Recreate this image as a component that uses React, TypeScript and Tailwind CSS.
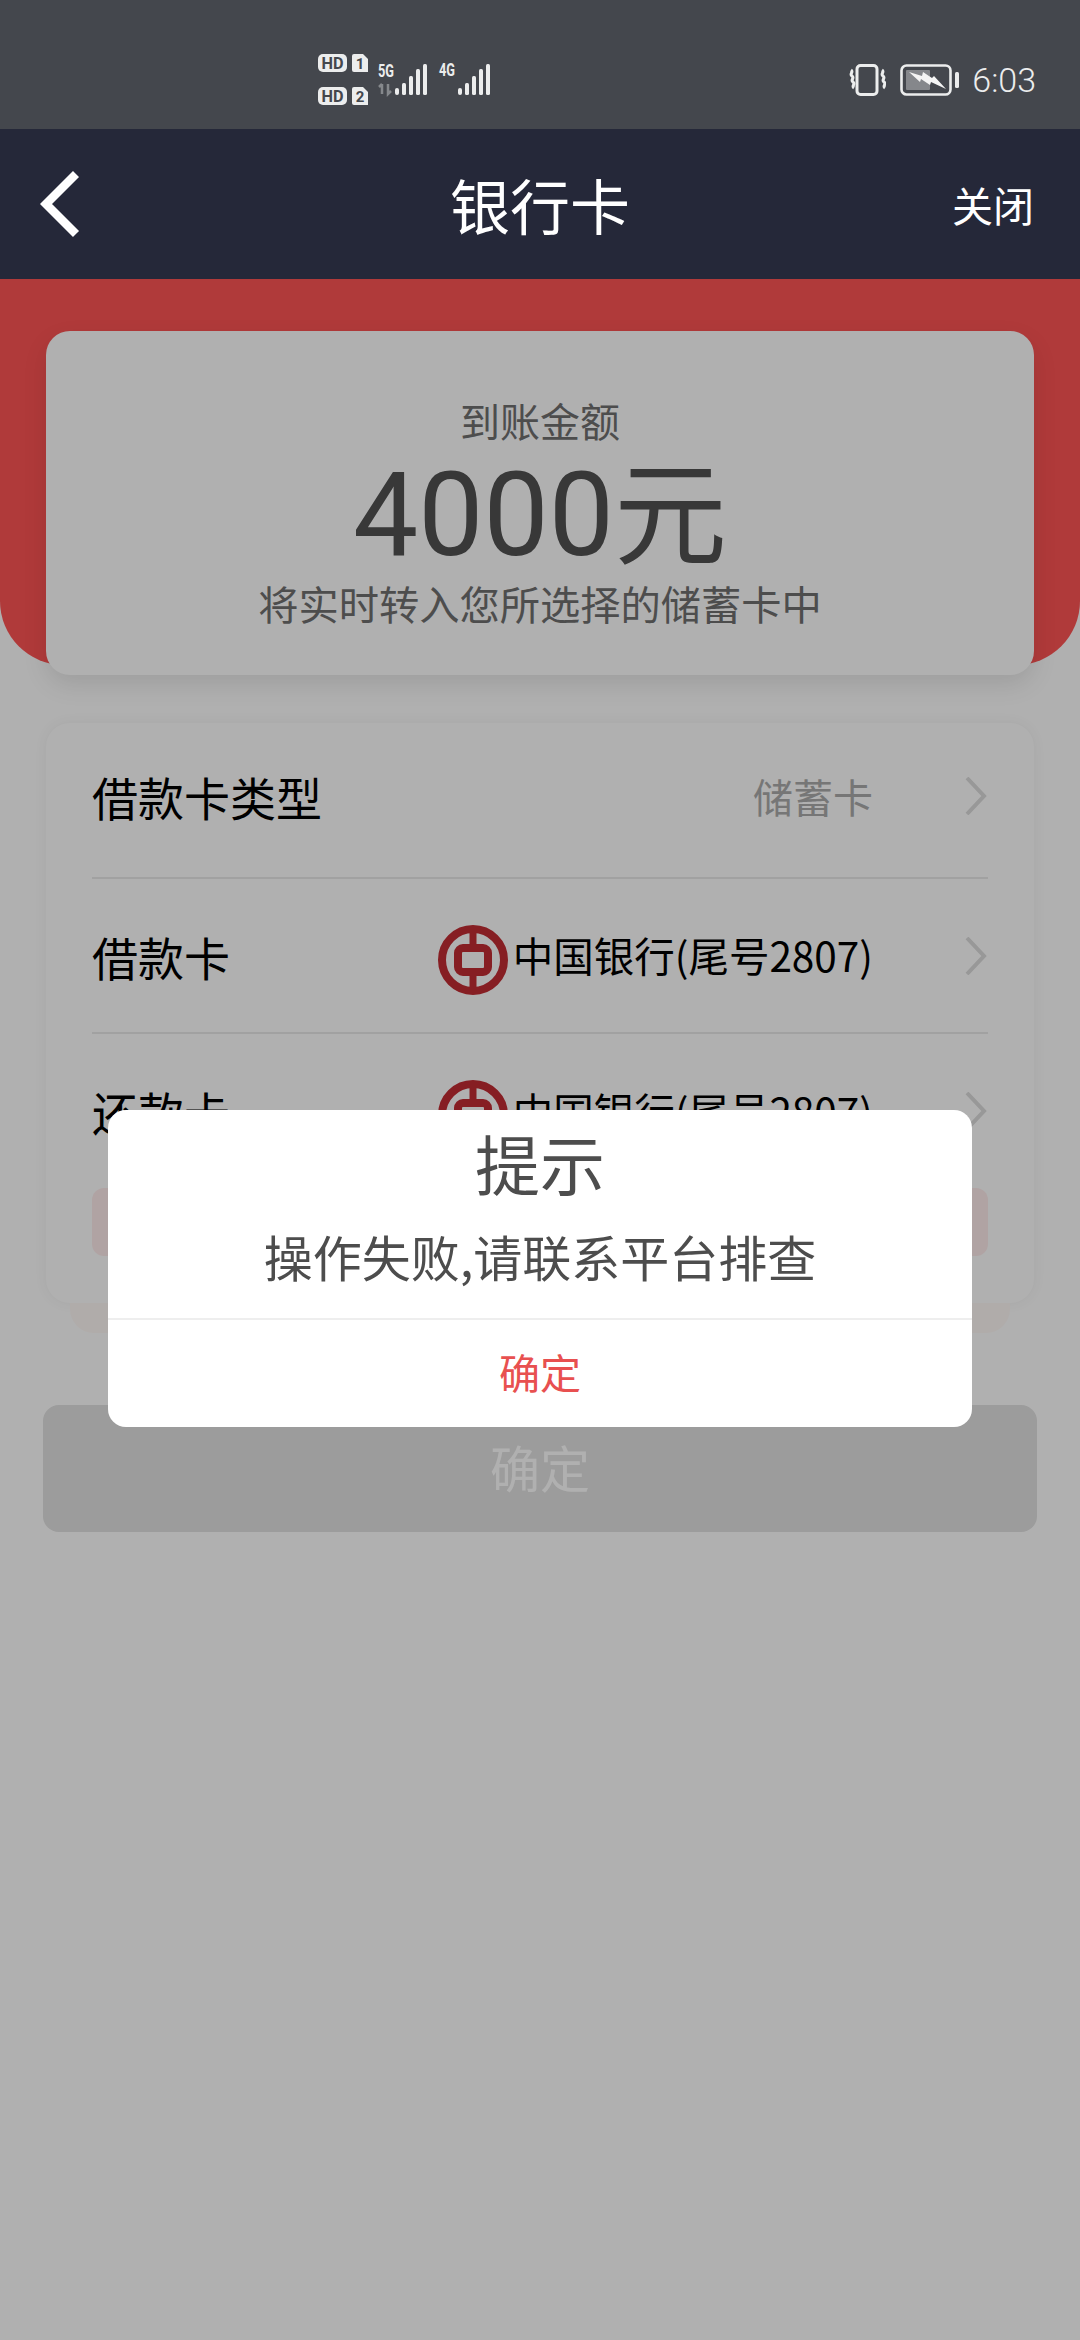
const cjk = "font-['Noto_Sans_CJK_SC','Noto_Sans',sans-serif]";

const Signal = ({ x }: { x: number }) => (
  <>
    <rect x={x} y={34} width={4} height={7} rx={2} fill="#eceded" />
    <rect x={x + 7} y={29} width={4} height={12} rx={1.5} fill="#eceded" />
    <rect x={x + 14} y={22} width={4} height={19} rx={1.5} fill="#eceded" />
    <rect x={x + 21} y={15} width={4} height={26} rx={1.5} fill="#eceded" />
    <rect x={x + 28} y={10} width={4} height={31} rx={1.5} fill="#eceded" />
  </>
);

const SimBadge = ({ y, n }: { y: number; n: string }) => (
  <>
    <rect x={0} y={y} width={29} height={18} rx={5} fill="#eceded" />
    <text x={3.5} y={y + 15} textLength={22} lengthAdjust="spacingAndGlyphs" fontSize={16} fontWeight={700} fontFamily="Roboto, sans-serif" fill="#44474d">
      HD
    </text>
    <path d={`M36 ${y}h9l5 5v13h-14a2 2 0 0 1-2-2v-14a2 2 0 0 1 2-2z`} fill="#eceded" />
    <text x={42} y={y + 15} textAnchor="middle" fontSize={15} fontWeight={700} fontFamily="Roboto, sans-serif" fill="#44474d">
      {n}
    </text>
  </>
);

const StatusLeft = () => (
  <svg width="172" height="52" viewBox="0 0 172 52">
    <SimBadge y={0} n="1" />
    <SimBadge y={33} n="2" />
    <text x={60} y={23} textLength={16} lengthAdjust="spacingAndGlyphs" fontSize={18} fontWeight={700} fontFamily="Roboto, sans-serif" fill="#eceded">5G</text>
    <path d="M64 30v10M61 33l3-3M70 30v10l3-3" stroke="#85888c" strokeWidth={2.5} fill="none" />
    <Signal x={77} />
    <text x={121} y={22} textLength={16} lengthAdjust="spacingAndGlyphs" fontSize={18} fontWeight={700} fontFamily="Roboto, sans-serif" fill="#eceded">4G</text>
    <Signal x={140} />
  </svg>
);

const StatusRight = () => (
  <div className="flex items-center">
    <svg width="37" height="32" viewBox="0 0 37 32" fill="none" stroke="#eceded">
      <rect x="8" y="1.5" width="20" height="29" rx="3.5" strokeWidth="3" />
      <path d="M2 6c3 2-2 4 1 6s-2 4 1 6s-2 4 1 6M33 6c3 2-2 4 1 6s-2 4 1 6s-2 4 1 6" strokeWidth="3" />
    </svg>
    <svg width="60" height="32" viewBox="0 0 60 32" className="ml-[14px]">
      <rect x="1.5" y="1.5" width="49" height="29" rx="5" fill="none" stroke="#eceded" strokeWidth="2.6" />
      <rect x="6" y="6" width="24" height="20" rx="1" fill="#85878b" />
      <path d="M9 8l13 4l1-4l9 6l2-2l12 13l-15-7l-1 3l-9-6l-1 3z" fill="#f4f4f4" />
      <rect x="55" y="8" width="4" height="16" rx="1.5" fill="#eceded" />
    </svg>
    <span className="ml-[12px] text-[34px] leading-none font-light text-[#eceded] font-['Roboto',sans-serif]">6:03</span>
  </div>
);

const Chevron = () => (
  <svg width="22" height="38" viewBox="0 0 22 38" fill="none" stroke="#dcdcdc" strokeWidth="4">
    <path d="M2 1l17 18L2 37" />
  </svg>
);

const BocLogo = () => (
  <svg width="72" height="72" viewBox="0 0 72 72" fill="none" stroke="#c22c33" className="mt-[8px] shrink-0">
    <circle cx="36" cy="36" r="31" strokeWidth="8" />
    <rect x="21" y="24" width="30" height="24" rx="5" strokeWidth="8" />
    <path d="M36 5v17M36 50v17" strokeWidth="7" />
  </svg>
);

const Row = ({ label, children, className }: { label: string; children: React.ReactNode; className: string }) => (
  <div className={`flex items-center justify-between ${className}`}>
    <span className="text-[46px] leading-none text-black">{label}</span>
    <div className="flex items-center">
      {children}
      <div className="ml-[92px] mr-[1px]">
        <Chevron />
      </div>
    </div>
  </div>
);

const BankValue = () => (
  <>
    <BocLogo />
    <span className="ml-[4px] text-[40.5px] leading-none text-black">中国银行(尾号2807)</span>
  </>
);

export default function App() {
  return (
    <div className={`relative h-[2340px] w-[1080px] overflow-hidden bg-white ${cjk}`}>
      <div className="flex h-[129px] items-center justify-between bg-[#44474d] pl-[318px] pr-[44px] pt-[30px]">
        <StatusLeft />
        <StatusRight />
      </div>
      <div className="flex h-[150px] items-center justify-between bg-[#252839] pl-[40px] pr-[46px]">
        <div className="w-[106px]">
          <svg width="40" height="66" viewBox="0 0 40 66" fill="none" stroke="#fff" strokeWidth="8.5">
            <path d="M36 3L6 33l30 30" />
          </svg>
        </div>
        <span className="text-[60px] leading-none text-white">银行卡</span>
        <span className="w-[100px] text-right text-[41px] leading-none text-white">关闭</span>
      </div>

      <div className="h-[386px] rounded-b-[64px] bg-[#ff5454]" />

      <div className="-mt-[334px] px-[46px]">
        <div className="flex h-[344px] flex-col items-center rounded-[24px] bg-white pt-[68px] shadow-[0_10px_24px_rgba(0,0,0,0.1)]">
          <span className="text-[40px] leading-[42px] text-[#707070]">到账金额</span>
          <span className="mt-[15px] flex items-baseline leading-none text-[#515151]">
            <span className="font-['Roboto',sans-serif] text-[116px] leading-[100px]">4000</span>
            <span className="text-[113px] leading-[100px]">元</span>
          </span>
          <span className="mt-[17px] text-[40.25px] leading-[42px] text-[#707070]">将实时转入您所选择的储蓄卡中</span>
        </div>

        <div className="mt-[48px] rounded-[24px] bg-white px-[46px] pb-[47px] shadow-[0_0_14px_rgba(0,0,0,0.05)]">
          <Row label="借款卡类型" className="h-[156px] border-b-2 border-[#e9e9e9] pb-[8px]">
            <span className="text-[40px] leading-none text-[#acacac]">储蓄卡</span>
          </Row>
          <Row label="借款卡" className="h-[155px] border-b-2 border-[#e9e9e9]">
            <BankValue />
          </Row>
          <Row label="还款卡" className="h-[154px]">
            <BankValue />
          </Row>
          <div className="h-[68px] rounded-[12px] bg-[#ffeded]" />
        </div>
        <div className="mx-[24px] h-[30px] rounded-b-[24px] bg-[#fffaf7]" />
      </div>

      <div className="px-[43px] pt-[72px]">
        <div className="flex h-[127px] items-center justify-center rounded-[16px] bg-[#e2e2e2] pb-[5px] text-[50px] leading-none text-white">
          确定
        </div>
      </div>

      <div className="absolute inset-x-0 bottom-0 top-[279px] bg-black/[0.31]" />

      <div className="absolute left-[108px] top-[1110px] flex h-[317px] w-[864px] flex-col items-center rounded-[18px] bg-white">
        <span className="mt-[21px] text-[65px] leading-[62px] text-[#4d4d4d]">提示</span>
        <span className="mt-[33px] text-[49px] leading-[60px] text-[#4d4d4d]">操作失败,请联系平台排查</span>
        <div className="mt-[32px] h-[2px] w-full bg-[#eeeeee]" />
        <span className="flex flex-1 items-center pb-[5px] text-[41px] leading-none text-[#e85050]">确定</span>
      </div>
    </div>
  );
}
